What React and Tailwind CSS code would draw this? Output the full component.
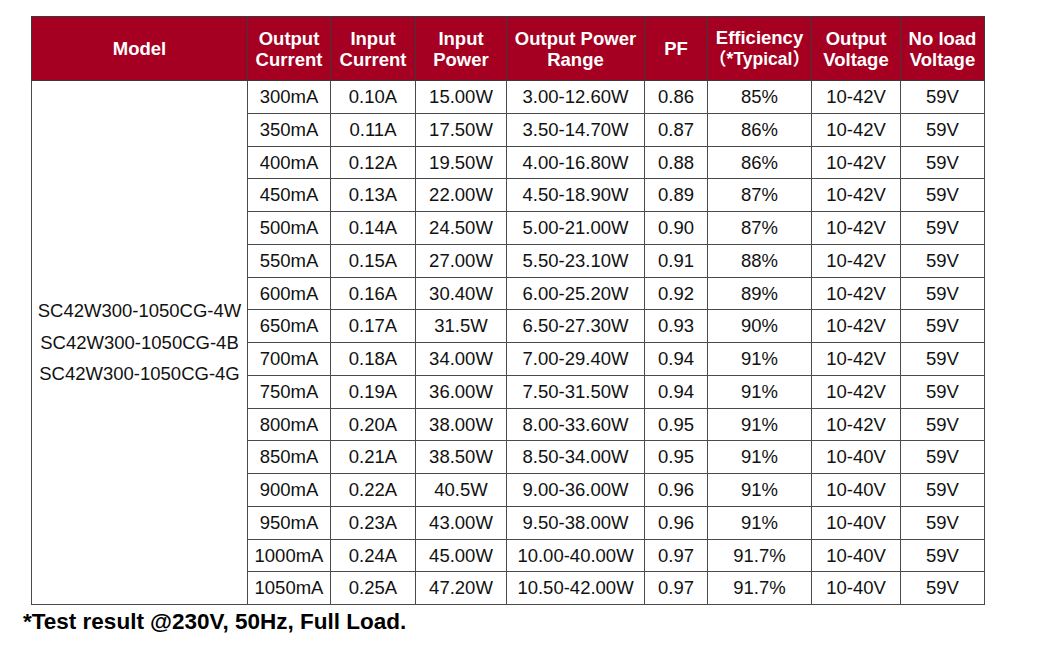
import React from 'react'

const rows = [
  ['300mA', '0.10A', '15.00W', '3.00-12.60W', '0.86', '85%', '10-42V', '59V'],
  ['350mA', '0.11A', '17.50W', '3.50-14.70W', '0.87', '86%', '10-42V', '59V'],
  ['400mA', '0.12A', '19.50W', '4.00-16.80W', '0.88', '86%', '10-42V', '59V'],
  ['450mA', '0.13A', '22.00W', '4.50-18.90W', '0.89', '87%', '10-42V', '59V'],
  ['500mA', '0.14A', '24.50W', '5.00-21.00W', '0.90', '87%', '10-42V', '59V'],
  ['550mA', '0.15A', '27.00W', '5.50-23.10W', '0.91', '88%', '10-42V', '59V'],
  ['600mA', '0.16A', '30.40W', '6.00-25.20W', '0.92', '89%', '10-42V', '59V'],
  ['650mA', '0.17A', '31.5W', '6.50-27.30W', '0.93', '90%', '10-42V', '59V'],
  ['700mA', '0.18A', '34.00W', '7.00-29.40W', '0.94', '91%', '10-42V', '59V'],
  ['750mA', '0.19A', '36.00W', '7.50-31.50W', '0.94', '91%', '10-42V', '59V'],
  ['800mA', '0.20A', '38.00W', '8.00-33.60W', '0.95', '91%', '10-42V', '59V'],
  ['850mA', '0.21A', '38.50W', '8.50-34.00W', '0.95', '91%', '10-40V', '59V'],
  ['900mA', '0.22A', '40.5W', '9.00-36.00W', '0.96', '91%', '10-40V', '59V'],
  ['950mA', '0.23A', '43.00W', '9.50-38.00W', '0.96', '91%', '10-40V', '59V'],
  ['1000mA', '0.24A', '45.00W', '10.00-40.00W', '0.97', '91.7%', '10-40V', '59V'],
  ['1050mA', '0.25A', '47.20W', '10.50-42.00W', '0.97', '91.7%', '10-40V', '59V'],
]

const widths = ['w-[216px]', 'w-[83px]', 'w-[85px]', 'w-[91px]', 'w-[138px]', 'w-[63px]', 'w-[104px]', 'w-[89px]', 'w-[84px]']

const th = 'border border-[#3a3a3a] bg-[#a50021] text-white font-bold text-[18.5px] leading-[21px] text-center align-middle p-0'
const td = 'border border-[#4a4a4a] text-[18.5px] text-[#111] text-center align-middle p-0'

export default function App() {
  return (
    <div className="min-h-screen bg-white pt-[16px] font-['Liberation_Sans','Noto_Sans_CJK_SC',sans-serif]">
      <table className="ml-[31px] w-[953px] table-fixed border-collapse">
        <colgroup>
          {widths.map((w, i) => (
            <col key={i} className={w} />
          ))}
        </colgroup>
        <thead>
          <tr className="h-[64px]">
            <th className={th}>Model</th>
            <th className={th}>Output<br />Current</th>
            <th className={th}>Input<br />Current</th>
            <th className={th}>Input<br />Power</th>
            <th className={th}>Output Power<br />Range</th>
            <th className={th}>PF</th>
            <th className={th}>
              Efficiency<br />
              <span className="text-[17.5px]">（*Typical）</span>
            </th>
            <th className={th}>Output<br />Voltage</th>
            <th className={th}>No load<br />Voltage</th>
          </tr>
        </thead>
        <tbody>
          {rows.map((r, i) => (
            <tr key={i} className="h-[32.75px]">
              {i === 0 && (
                <td rowSpan={16} className={td + ' leading-[31.5px]'}>
                  SC42W300-1050CG-4W<br />
                  SC42W300-1050CG-4B<br />
                  SC42W300-1050CG-4G
                </td>
              )}
              {r.map((c, j) => (
                <td key={j} className={td}>{c}</td>
              ))}
            </tr>
          ))}
        </tbody>
      </table>
      <p className="pl-[23px] pt-[4px] text-[22.5px] font-bold leading-[26px] text-black">
        *Test result @230V, 50Hz, Full Load.
      </p>
    </div>
  )
}
